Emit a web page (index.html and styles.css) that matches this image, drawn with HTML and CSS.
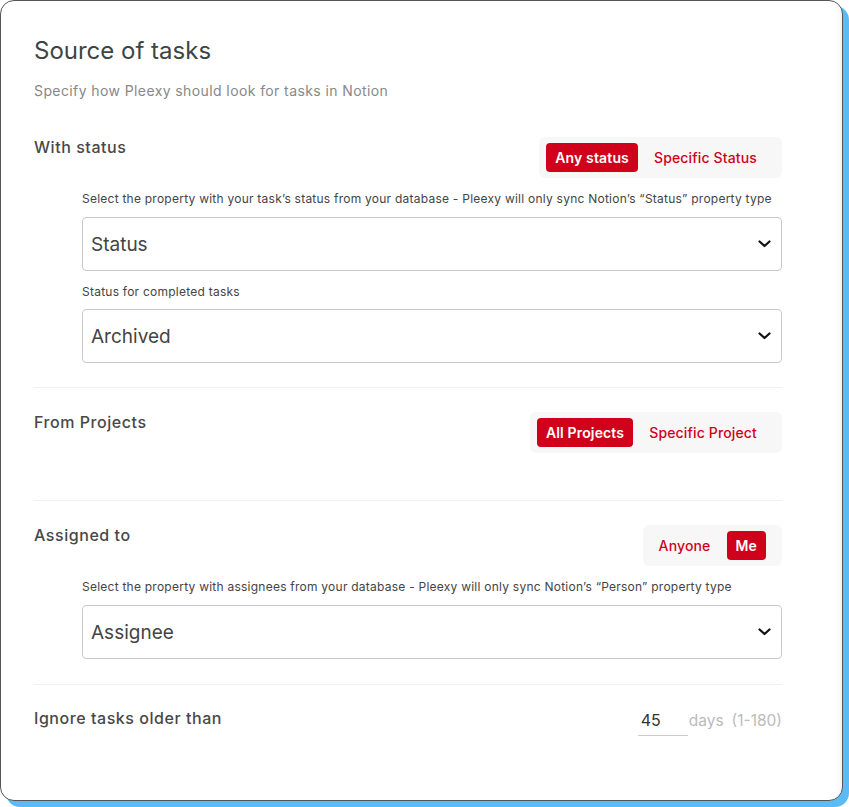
FILE: index.html
```html
<!DOCTYPE html>
<html lang="en">
  <head>
    <meta charset="UTF-8" />
    <meta name="viewport" content="width=device-width, initial-scale=1.0" />
    <title>Source of tasks</title>
    <link rel="stylesheet" href="styles.css">
  </head>
  <body>
    <div class="card">
      <h1 class="card__title">Source of tasks</h1>
      <p class="card__subtitle">Specify how Pleexy should look for tasks in Notion</p>

      <section class="setting">
        <div class="setting__row">
          <span class="setting__label">With status</span>
          <div class="toggle">
            <button type="button" class="toggle__btn toggle__btn--active">Any status</button>
            <button type="button" class="toggle__btn">Specific Status</button>
          </div>
        </div>
        <div class="setting__body">
          <p class="setting__help">Select the property with your task’s status from your database - Pleexy will only sync Notion’s “Status” property type</p>
          <div class="select">
            <span>Status</span>
            <svg class="select__chevron" width="13" height="8" viewBox="0 0 13 8"><path d="M1.5 1.5l5 4.5 5-4.5" fill="none" stroke="#111" stroke-width="2.2" stroke-linecap="round" stroke-linejoin="round"/></svg>
          </div>
          <p class="setting__help">Status for completed tasks</p>
          <div class="select">
            <span>Archived</span>
            <svg class="select__chevron" width="13" height="8" viewBox="0 0 13 8"><path d="M1.5 1.5l5 4.5 5-4.5" fill="none" stroke="#111" stroke-width="2.2" stroke-linecap="round" stroke-linejoin="round"/></svg>
          </div>
        </div>
      </section>

      <section class="setting setting--short">
        <div class="setting__row">
          <span class="setting__label">From Projects</span>
          <div class="toggle">
            <button type="button" class="toggle__btn toggle__btn--active">All Projects</button>
            <button type="button" class="toggle__btn">Specific Project</button>
          </div>
        </div>
      </section>

      <section class="setting setting--assignee">
        <div class="setting__row">
          <span class="setting__label">Assigned to</span>
          <div class="toggle">
            <button type="button" class="toggle__btn">Anyone</button>
            <button type="button" class="toggle__btn toggle__btn--active">Me</button>
          </div>
        </div>
        <div class="setting__body">
          <p class="setting__help">Select the property with assignees from your database - Pleexy will only sync Notion’s “Person” property type</p>
          <div class="select">
            <span>Assignee</span>
            <svg class="select__chevron" width="13" height="8" viewBox="0 0 13 8"><path d="M1.5 1.5l5 4.5 5-4.5" fill="none" stroke="#111" stroke-width="2.2" stroke-linecap="round" stroke-linejoin="round"/></svg>
          </div>
        </div>
      </section>

      <section class="setting setting--last">
        <div class="setting__row">
          <span class="setting__label">Ignore tasks older than</span>
          <div class="days">
            <span class="days__input">45</span>
            <span class="days__unit">days</span>
            <span class="days__range">(1-180)</span>
          </div>
        </div>
      </section>
    </div>
  </body>
</html>
```

FILE: styles.css
```css
* {
  box-sizing: border-box;
}

body {
  margin: 0;
  padding: 0 6px 6px 0;
  background: #fff;
  font-family: Inter, "Open Sans", sans-serif;
  color: #444;
}

p {
  margin: 0;
}

.card {
  width: 843px;
  height: 801px;
  padding: 34px 60px 0 33px;
  border: 1px solid #555;
  border-radius: 14px;
  background: #fff;
  box-shadow: 6px 6px 0 #5bbcf5, inset -9px 0 9px -9px rgba(0, 0, 0, 0.08);
}

.card__title {
  margin: 0;
  font-size: 24px;
  line-height: 31px;
  font-weight: 400;
  color: #3d4543;
}

.card__subtitle {
  margin-top: 16px;
  font-size: 14px;
  line-height: 18px;
  letter-spacing: 0.4px;
  color: #888;
}

.setting {
  padding: 24px 0;
  border-top: 1px solid #f1f1f1;
}

.card__subtitle + .setting {
  margin-top: 13px;
  border-top: 0;
}

.setting--short {
  padding-bottom: 47px;
}

.setting--assignee {
  padding-bottom: 25px;
}

.setting__row {
  display: flex;
  justify-content: space-between;
  align-items: flex-start;
}

.setting__label {
  font-size: 16px;
  line-height: 20px;
  font-weight: 500;
  letter-spacing: 0.55px;
  color: #484848;
}

.toggle {
  display: flex;
  gap: 7px;
  padding: 6px 16px 6px 7px;
  border-radius: 6px;
  background: #f7f7f7;
}

.toggle__btn {
  all: unset;
  height: 29px;
  padding: 0 9px;
  border-radius: 4px;
  font-family: inherit;
  font-size: 14px;
  line-height: 29px;
  font-weight: 500;
  letter-spacing: 0.15px;
  color: #d0021b;
  cursor: pointer;
}

.toggle__btn--active {
  background: #d0021b;
  color: #fff;
  font-weight: 600;
}

.setting__body {
  margin-left: 48px;
}

.setting__help {
  margin: 13px 0 10px;
  font-size: 12px;
  line-height: 16px;
  letter-spacing: 0.24px;
  color: #444;
}

.select + .setting__help {
  margin: 13px 0 9px;
}

.select {
  display: flex;
  justify-content: space-between;
  align-items: center;
  height: 54px;
  padding: 0 10px 0 8px;
  border: 1px solid #c9c9c9;
  border-radius: 4px;
  font-size: 19px;
  color: #444;
}

.select__chevron {
  display: block;
}

.setting--last {
  padding-top: 23px;
}

.days {
  display: flex;
  align-items: baseline;
  margin-top: 2px;
  font-size: 15.5px;
  color: #bbb;
}

.days__input {
  width: 50px;
  padding: 0 3px 5px;
  border-bottom: 1px solid #ccc;
  font-size: 16px;
  color: #333;
}

.days__unit {
  margin-left: 1px;
}

.days__range {
  margin-left: 8px;
}
```
